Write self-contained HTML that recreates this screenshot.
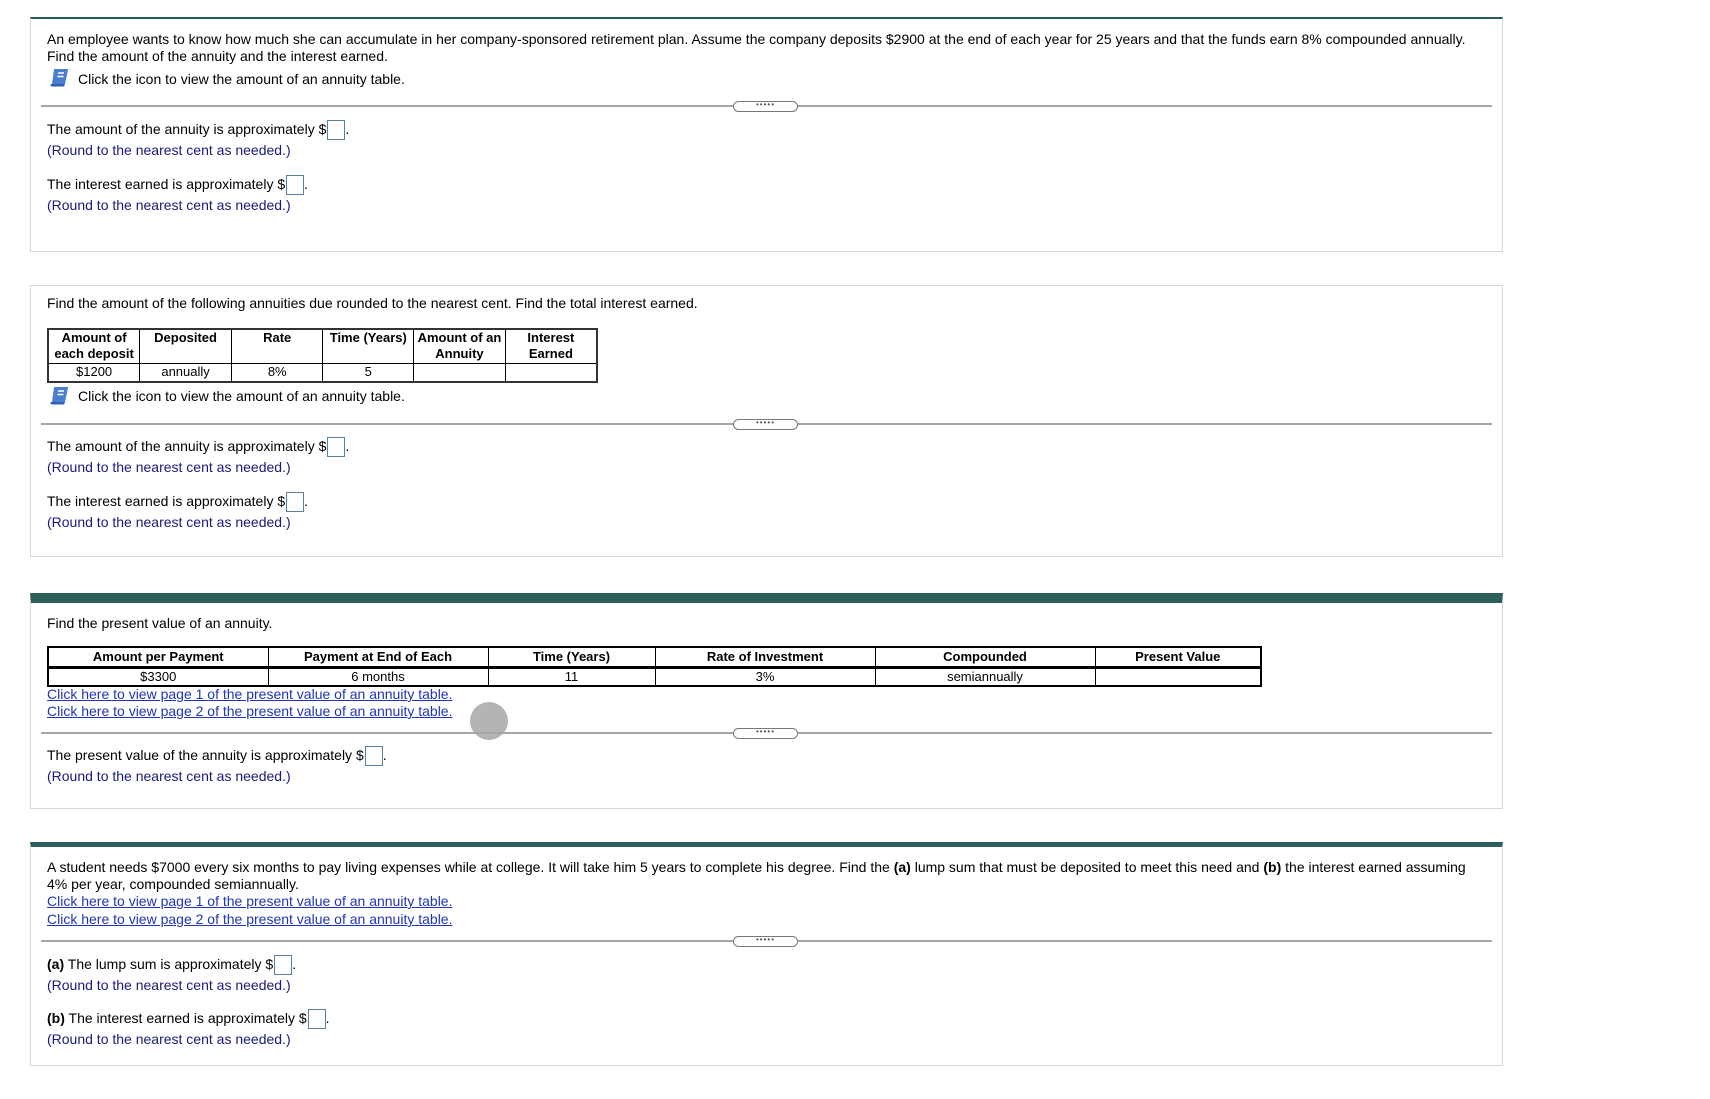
<!DOCTYPE html>
<html><head><meta charset="utf-8"><style>
*{margin:0;padding:0;box-sizing:border-box}
body{width:1710px;height:1099px;background:#fff;font-family:"Liberation Sans",Arial,sans-serif;font-size:14px;color:#000;position:relative;overflow:hidden}
.card{position:absolute;left:30px;width:1473px;border:1px solid #d8d8d8;background:#fff}
.t{position:absolute;left:47px;white-space:nowrap;line-height:17px}
.b{color:#1a1a7a}
.sep{position:absolute;left:41px;width:1451px;height:2px;background:#a3a7ab}
.pill{position:absolute;left:733px;width:65px;height:11px;border:1px solid #777;border-radius:6px;background:#fff;font-size:8px;line-height:6px;text-align:center;letter-spacing:1px;color:#555}
.box{display:inline-block;width:18px;height:20px;border:1px solid #5a7f9a;vertical-align:-6px;margin-left:1px}
.icon{position:absolute;left:49px;width:20px;height:19px}
a{color:#1f35b8;text-decoration:underline}
table{position:absolute;border-collapse:collapse;font-size:13px}
td,th{border:1px solid #000;text-align:center;line-height:16px;padding:0}
th{font-weight:bold}
</style></head><body>

<svg width="0" height="0" style="position:absolute"><defs><g id="bk"><path d="M5 1.5 Q5 1 6 1 H18.5 Q19.5 1 19 2 L16 16 H3 Z" fill="#4a7fd0"/><path d="M3 16 Q1 16 1.5 17.5 Q2 18.5 3.5 18.5 H15 L16 16" fill="#2f5fae"/><path d="M9 5 H15 M8.5 8.5 H14.5" stroke="#fff" stroke-width="1.5"/></g></defs></svg>

<!-- card 1 -->
<div class="card" style="top:17px;height:235px;border-top:2px solid #2d5f5a"></div>
<div class="t" style="top:31px">An employee wants to know how much she can accumulate in her company-sponsored retirement plan. Assume the company deposits $2900 at the end of each year for 25 years and that the funds earn 8% compounded annually.</div>
<div class="t" style="top:48px">Find the amount of the annuity and the interest earned.</div>
<svg class="icon" style="top:68px" viewBox="0 0 20 19"><use href="#bk"/></svg>
<div class="t" style="top:71px;left:78px">Click the icon to view the amount of an annuity table.</div>
<div class="sep" style="top:105px"></div><div class="pill" style="top:101px">•••••</div>
<div class="t" style="top:120px">The amount of the annuity is approximately $<span class="box"></span>.</div>
<div class="t b" style="top:142px">(Round to the nearest cent as needed.)</div>
<div class="t" style="top:175px">The interest earned is approximately $<span class="box"></span>.</div>
<div class="t b" style="top:197px">(Round to the nearest cent as needed.)</div>

<!-- card 2 -->
<div class="card" style="top:285px;height:272px"></div>
<div class="t" style="top:295px">Find the amount of the following annuities due rounded to the nearest cent. Find the total interest earned.</div>
<table style="left:47px;top:328px;width:551px;border:2px solid #333">
<colgroup><col style="width:92px"><col style="width:92px"><col style="width:92px"><col style="width:91px"><col style="width:92px"><col style="width:92px"></colgroup>
<tr style="height:34px"><th style="vertical-align:top">Amount of<br>each deposit</th><th style="vertical-align:top">Deposited</th><th style="vertical-align:top">Rate</th><th style="vertical-align:top">Time (Years)</th><th style="vertical-align:top">Amount of an<br>Annuity</th><th style="vertical-align:top">Interest<br>Earned</th></tr>
<tr style="height:19px"><td>$1200</td><td>annually</td><td>8%</td><td>5</td><td></td><td></td></tr>
</table>
<svg class="icon" style="top:386px" viewBox="0 0 20 19"><use href="#bk"/></svg>
<div class="t" style="top:388px;left:78px">Click the icon to view the amount of an annuity table.</div>
<div class="sep" style="top:423px"></div><div class="pill" style="top:419px">•••••</div>
<div class="t" style="top:437px">The amount of the annuity is approximately $<span class="box"></span>.</div>
<div class="t b" style="top:459px">(Round to the nearest cent as needed.)</div>
<div class="t" style="top:492px">The interest earned is approximately $<span class="box"></span>.</div>
<div class="t b" style="top:514px">(Round to the nearest cent as needed.)</div>

<!-- card 3 -->
<div class="card" style="top:593px;height:216px;border-top:10px solid #2d5f5a"></div>
<div class="t" style="top:615px">Find the present value of an annuity.</div>
<table style="left:47px;top:646px;width:1215px;border:2px solid #000">
<colgroup><col style="width:220px"><col style="width:220px"><col style="width:167px"><col style="width:220px"><col style="width:220px"><col style="width:166px"></colgroup>
<tr style="height:20px;border-bottom:3px solid #000"><th>Amount per Payment</th><th>Payment at End of Each</th><th>Time (Years)</th><th>Rate of Investment</th><th>Compounded</th><th>Present Value</th></tr>
<tr style="height:18px"><td>$3300</td><td>6 months</td><td>11</td><td>3%</td><td>semiannually</td><td></td></tr>
</table>
<div class="t" style="top:686px"><a>Click here to view page 1 of the present value of an annuity table.</a></div>
<div class="t" style="top:703px"><a>Click here to view page 2 of the present value of an annuity table.</a></div>
<div style="position:absolute;left:470px;top:702px;width:38px;height:38px;border-radius:50%;background:#b4b4b4"></div>
<div class="sep" style="top:732px"></div><div class="pill" style="top:728px">•••••</div>
<div class="t" style="top:746px">The present value of the annuity is approximately $<span class="box"></span>.</div>
<div class="t b" style="top:768px">(Round to the nearest cent as needed.)</div>

<!-- card 4 -->
<div class="card" style="top:842px;height:224px;border-top:5px solid #2d5f5a"></div>
<div class="t" style="top:859px">A student needs $7000 every six months to pay living expenses while at college. It will take him 5 years to complete his degree. Find the <b>(a)</b> lump sum that must be deposited to meet this need and <b>(b)</b> the interest earned assuming</div>
<div class="t" style="top:876px">4% per year, compounded semiannually.</div>
<div class="t" style="top:893px"><a>Click here to view page 1 of the present value of an annuity table.</a></div>
<div class="t" style="top:911px"><a>Click here to view page 2 of the present value of an annuity table.</a></div>
<div class="sep" style="top:940px"></div><div class="pill" style="top:936px">•••••</div>
<div class="t" style="top:955px"><b>(a)</b> The lump sum is approximately $<span class="box"></span>.</div>
<div class="t b" style="top:977px">(Round to the nearest cent as needed.)</div>
<div class="t" style="top:1009px"><b>(b)</b> The interest earned is approximately $<span class="box"></span>.</div>
<div class="t b" style="top:1031px">(Round to the nearest cent as needed.)</div>

</body></html>
